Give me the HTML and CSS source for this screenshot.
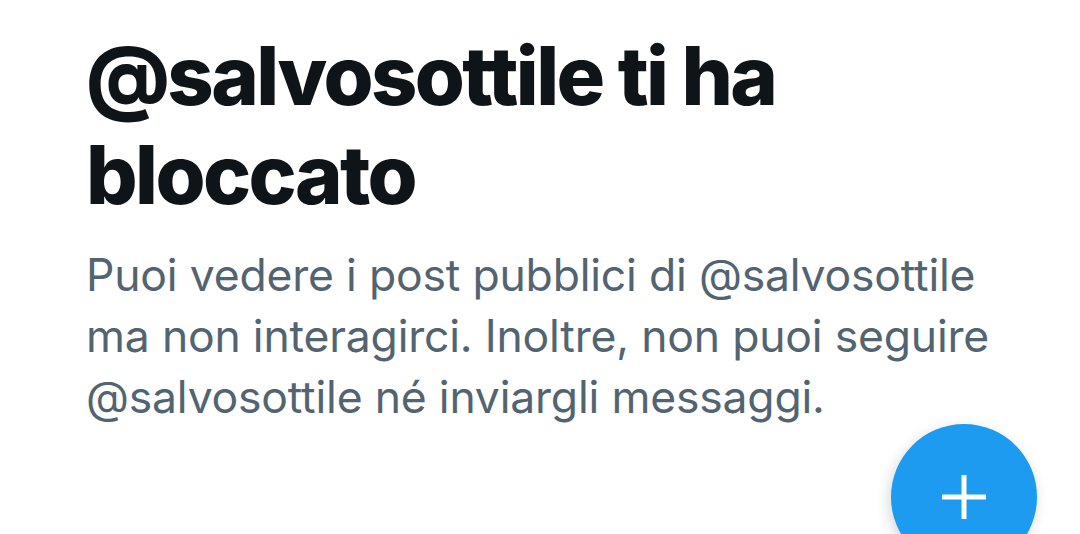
FILE: index.html
```html
<!DOCTYPE html>
<html lang="it">
<head>
  <meta charset="UTF-8">
  <title>Bloccato</title>
  <meta name="viewport" content="width=device-width, initial-scale=1.0">
  <link rel="stylesheet" href="styles.css">
</head>
<body>

<!-- Blocked notice -->
<div class="blocked">
  <h1 class="blocked-title">@salvosottile ti ha bloccato</h1>
  <p class="blocked-text">Puoi vedere i post pubblici di @salvosottile ma non interagirci. Inoltre, non puoi seguire @salvosottile né inviargli messaggi.</p>
</div>

<!-- Compose button (cut off by the screen edge) -->
<div class="fab-wrap">
  <button class="fab" aria-label="Nuovo post">
    <svg viewBox="0 0 48 48" width="48" height="48">
      <path d="M24 2v44M2 24h44" stroke="#fff" stroke-width="5" fill="none"/>
    </svg>
  </button>
</div>

</body>
</html>
```

FILE: styles.css
```css
body { margin: 0; background: #fff; font-family: Inter, "Noto Sans", sans-serif; }
.blocked { padding: 27px 0 0 86px; width: 920px; }
.blocked-title {
  margin: 0; font-size: 81px; line-height: 99px; font-weight: 800;
  color: #0f1419; letter-spacing: -2.6px;
}
.blocked-text {
  margin: 20px 0 0; font-size: 44.5px; line-height: 61px; font-weight: 420;
  color: #536471; letter-spacing: -0.2px;
}
.fab-wrap {
  position: absolute; left: 861px; top: 404px; right: 0; bottom: 0;
  overflow: hidden;
}
.fab {
  margin: 20px 0 0 30px;
  width: 146px; height: 146px; border-radius: 50%;
  background: #1d9bf0; border: none; padding: 0;
  display: flex; align-items: center; justify-content: center;
  box-shadow: -2px 4px 14px rgba(0, 0, 0, 0.16);
}
```
